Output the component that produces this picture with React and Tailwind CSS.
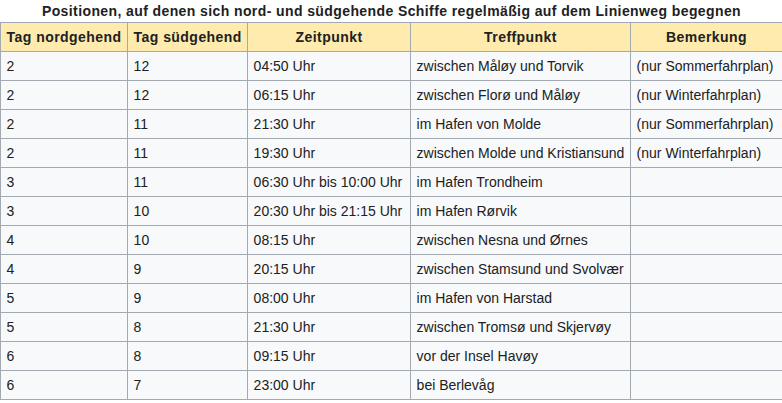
import React from "react";

const rows = [
  ["2", "12", "04:50 Uhr", "zwischen Måløy und Torvik", "(nur Sommerfahrplan)"],
  ["2", "12", "06:15 Uhr", "zwischen Florø und Måløy", "(nur Winterfahrplan)"],
  ["2", "11", "21:30 Uhr", "im Hafen von Molde", "(nur Sommerfahrplan)"],
  ["2", "11", "19:30 Uhr", "zwischen Molde und Kristiansund", "(nur Winterfahrplan)"],
  ["3", "11", "06:30 Uhr bis 10:00 Uhr", "im Hafen Trondheim", ""],
  ["3", "10", "20:30 Uhr bis 21:15 Uhr", "im Hafen Rørvik", ""],
  ["4", "10", "08:15 Uhr", "zwischen Nesna und Ørnes", ""],
  ["4", "9", "20:15 Uhr", "zwischen Stamsund und Svolvær", ""],
  ["5", "9", "08:00 Uhr", "im Hafen von Harstad", ""],
  ["5", "8", "21:30 Uhr", "zwischen Tromsø und Skjervøy", ""],
  ["6", "8", "09:15 Uhr", "vor der Insel Havøy", ""],
  ["6", "7", "23:00 Uhr", "bei Berlevåg", ""],
];

const headers = ["Tag nordgehend", "Tag südgehend", "Zeitpunkt", "Treffpunkt", "Bemerkung"];

export default function App() {
  return (
    <div className="bg-white text-[#202122] text-[14px] leading-[22.4px] font-['Liberation_Sans',Arial,sans-serif]">
      <table className="table-fixed w-[782px] border-collapse bg-[#f8f9fa] border border-[#a2a9b1]">
        <caption className="font-bold tracking-[0.4px] bg-white text-center">
          Positionen, auf denen sich nord- und südgehende Schiffe regelmäßig auf dem Linienweg begegnen
        </caption>
        <colgroup>
          <col className="w-[127px]" />
          <col className="w-[120px]" />
          <col className="w-[163px]" />
          <col className="w-[220px]" />
          <col className="w-[152px]" />
        </colgroup>
        <thead>
          <tr>
            {headers.map((h) => (
              <th
                key={h}
                className="bg-[#feebad] border border-[#a2a9b1] px-[5.6px] py-[2.8px] text-center font-bold tracking-[0.45px] whitespace-nowrap"
              >
                {h}
              </th>
            ))}
          </tr>
        </thead>
        <tbody>
          {rows.map((r, i) => (
            <tr key={i}>
              {r.map((c, j) => (
                <td
                  key={j}
                  className="border border-[#a2a9b1] px-[5.6px] py-[2.8px] text-left whitespace-nowrap"
                >
                  {c}
                </td>
              ))}
            </tr>
          ))}
        </tbody>
      </table>
    </div>
  );
}
